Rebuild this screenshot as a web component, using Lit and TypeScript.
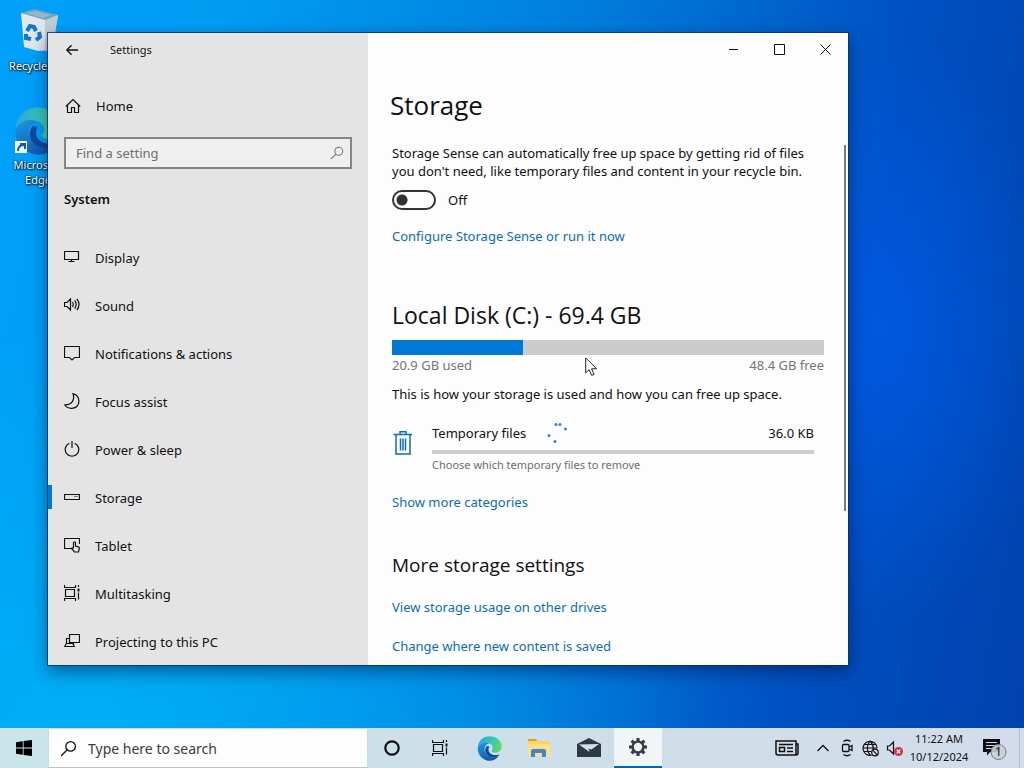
import { LitElement, html, css, svg } from "lit";
import { customElement, state } from "lit/decorators.js";

const ic = (body: unknown, size = 16) => html`<svg width=${size} height=${size} viewBox="0 0 16 16" fill="none" stroke="currentColor" stroke-width="1.2" aria-hidden="true">${body}</svg>`;

const icons = {
  display: svg`<path d="M.5 2.500h14v8H.5zM7.500 10.500v2M4.500 12.500h6"/>`,
  sound: svg`<path d="M.5 5.500h2.500L6.500 2v11L3 9.500H.5zM8.500 5q1.600 2.500 0 5M10.700 3.300q3 4.200 0 8.400M12.900 1.800q4.200 5.700 0 11.400"/>`,
  notifications: svg`<path d="M.5 1.500h15v11h-5L8 15l-2.500-2.500h-5z"/>`,
  focus: svg`<path d="M9 .6C17 3 17 14.500 8 15.300 4.500 15.500 2 14 .8 11.800 8 12 11 7 9 .6z"/>`,
  power: svg`<path d="M5.300 2.200a6.800 6.800 0 1 0 5.400 0M8 0v7"/>`,
  storage: svg`<path d="M.5 5.500h15v5H.5z"/><path d="M10.500 7.500h1M12.500 7.500h1"/>`,
  tablet: svg`<path d="M7 11.500H.5v-10h15V7"/><path d="M9.500 11V5.500q1-1.500 2 0V9l3 .8q1 .5.800 1.700l-.8 3.500h-4L7.500 11.500q1-1.200 2 0"/>`,
  multitasking: svg`<path d="M1.500 4.500h9v7h-9zM.5 0v2.500h11V0M.5 16v-2.500h11V16M14.500 0v2M14.500 7.500v7"/><path d="M14.500 3.500v3" stroke-width="2"/>`,
  projecting: svg`<path d="M5.500 1.500h10v8h-10z"/><path d="M5.500 5.500h-3v5M.8 13.500h9.500l-1.500-3H2.300zM9.500 9.500v2"/>`,
  home: svg`<path d="M.8 8.500 8 1.500l7.200 7M2.500 7v7.500h4v-5h3v5h4V7"/>`,
  search: svg`<circle cx="10" cy="6" r="4.500"/><path d="M6.800 9.200 1 15"/>`,
  back: svg`<path d="M15 8H2.500M7.500 2.500 2 8l5.500 5.500" stroke-width="1.500"/>`,
};

const edge = (size: number, id: string) => html`<svg width=${size} height=${size} viewBox="0 0 24 24" aria-hidden="true">
  <defs>
    <linearGradient id="${id}a" x1="0" y1=".3" x2="1" y2=".5"><stop offset="0" stop-color="#2aa5dc"/><stop offset=".6" stop-color="#36c9b5"/><stop offset="1" stop-color="#66d85f"/></linearGradient>
    <linearGradient id="${id}b" x1="0" y1="0" x2=".6" y2="1"><stop offset="0" stop-color="#1c9be4"/><stop offset="1" stop-color="#1456b0"/></linearGradient>
  </defs>
  <path fill="url(#${id}b)" d="M1 10C3 5.500 8 4.500 12 7c-4 1-6 5-4 9s7 6 13 3c-4 6-11 6-15.500 2.500C1.500 18.500 0 14 1 10z"/>
  <path fill="#114a98" d="M9.500 9.500C6 13 8 20 15 20.500c3 .2 5.500-1 7-3-4 1.700-9 .7-10.500-2.500-.8-2-.4-4 .5-5z"/>
  <path fill="url(#${id}a)" d="M.8 11C1.200 4.500 6 .3 12 .3c7 0 11.700 4.700 11.700 9.700 0 3.600-2.700 6-6 6-3 0-4.300-1.200-3.400-2.400 1.500-2 .7-5-2.300-6.300C8 5.500 3 6.500.8 11z"/>
</svg>`;

const navItems: [string, unknown][] = [
  ["Display", icons.display],
  ["Sound", icons.sound],
  ["Notifications & actions", icons.notifications],
  ["Focus assist", icons.focus],
  ["Power & sleep", icons.power],
  ["Storage", icons.storage],
  ["Tablet", icons.tablet],
  ["Multitasking", icons.multitasking],
  ["Projecting to this PC", icons.projecting],
];

const base = css`
  * { box-sizing: border-box; }
  svg { display: block; flex: none; }
  button, input { font: inherit; color: inherit; border: 0; background: none; padding: 0; margin: 0; border-radius: 0; }
  h1, h2, h3, p, ul { margin: 0; padding: 0; font-weight: 400; }
  ul { list-style: none; }
  a { color: inherit; text-decoration: none; }
`;

@customElement("settings-sidebar")
class SettingsSidebar extends LitElement {
  @state() current = "Storage";

  static styles = [base, css`
    :host { display: block; background: #e4e4e4; overflow: hidden; }
    .title { display: flex; align-items: center; height: 33px; font-size: 11px; }
    .back { width: 48px; height: 32px; display: grid; place-items: center; }
    .caption { padding-left: 14px; }
    .home { display: flex; align-items: center; gap: 15px; height: 48px; margin-top: 16px; padding-left: 17px; }
    .search { display: flex; align-items: center; height: 32px; margin: 7px 16px 0; padding: 0 6px 0 10px; border: 2px solid #858585; background: #efefef; color: #777; }
    .search input { flex: 1; min-width: 0; outline: 0; }
    .search input::placeholder { color: #707070; opacity: 1; }
    .group { font-size: 13px; line-height: 60px; margin-bottom: 5px; padding-left: 16px; font-weight: 600; }
    .item { display: flex; align-items: center; gap: 15px; height: 48px; padding-left: 16px; position: relative; }
    .item svg { margin-bottom: 2px; }
    .item.on::before { content: ""; position: absolute; left: 0; top: 11px; width: 4px; height: 24px; background: #0078d7; }
  `];

  render() {
    return html`
      <div class="title">
        <button class="back" aria-label="Back">${ic(icons.back, 14)}</button>
        <span class="caption">Settings</span>
      </div>
      <a class="home" href="#home">${ic(icons.home)}Home</a>
      <label class="search"><input type="text" placeholder="Find a setting" aria-label="Find a setting">${ic(icons.search, 14)}</label>
      <h2 class="group">System</h2>
      <ul>${navItems.map(([name, icon]) => html`
        <li><a class="item ${name === this.current ? "on" : ""}" href="#" @click=${() => (this.current = name)}>${ic(icon)}${name}</a></li>`)}
      </ul>`;
  }
}

@customElement("storage-page")
class StoragePage extends LitElement {
  @state() used = 30.3;

  static styles = [base, css`
    :host { display: flex; flex-direction: column; background: #fdfdfd; min-width: 0; overflow: hidden; position: relative; }
    .buttons { display: flex; justify-content: flex-end; height: 33px; flex: none; }
    .buttons button { width: 46px; display: grid; place-items: center; }
    h1, h2, h3 { font-family: "Open Sans", "Noto Sans", sans-serif; }
    h1 { font-size: 26px; line-height: 40px; margin-top: 19px; padding-left: 22px; }
    .content { flex: 1; min-height: 0; overflow: hidden; padding: 19px 24px 0; }
    .content > p, .link { line-height: 18px; }
    .link { display: block; width: fit-content; color: #0a6cbd; }
    .switch { display: flex; align-items: center; gap: 12px; height: 20px; margin: 10px 0 17px; }
    .switch input { appearance: none; width: 44px; height: 20px; border: 2px solid #333; border-radius: 10px; background: radial-gradient(circle at 8px 8px, #333 5px, transparent 6px); }
    h2 { font-size: 23px; line-height: 32px; margin-top: 54px; }
    .disk { height: 15px; margin-top: 9px; background: #ccc; }
    .fill { height: 100%; background: #0078d7; }
    .split { display: flex; justify-content: space-between; line-height: 18px; color: #767676; margin: 1px 0 11px; }
    .category { display: flex; gap: 20px; margin: 21px 10px 20px 0; color: inherit; }
    .category > svg { color: #0f6cb6; margin-top: 6px; }
    .detail { flex: 1; }
    .row { display: flex; line-height: 18px; }
    .ring { margin: -1px auto 0 20px; }
    .line { height: 4px; margin: 7px 0 3px; background: #ccc; }
    .note { font-size: 11px; line-height: 16px; color: #6e6e6e; }
    h3 { font-size: 19px; line-height: 28px; margin: 40px 0 19px; }
    .more { display: grid; gap: 21px; }
    .thumb { position: absolute; right: 2px; top: 112px; height: 366px; width: 2px; background: #7d7d7d; }
  `];

  render() {
    return html`
      <div class="buttons">
        <button aria-label="Minimize"><svg width="11" height="11" stroke="#111"><path d="M1 5.500h9"/></svg></button>
        <button aria-label="Maximize"><svg width="11" height="11" stroke="#111" fill="none"><path d="M.5.500h10v10H.5z"/></svg></button>
        <button aria-label="Close"><svg width="11" height="11" stroke="#111"><path d="m.5.500 10 10m0-10-10 10"/></svg></button>
      </div>
      <h1>Storage</h1>
      <div class="content">
        <p>Storage Sense can automatically free up space by getting rid of files<br>you don't need, like temporary files and content in your recycle bin.</p>
        <label class="switch"><input type="checkbox" role="switch">Off</label>
        <a class="link" href="#sense">Configure Storage Sense or run it now</a>
        <h2>Local Disk (C:) - 69.4 GB</h2>
        <div class="disk"><div class="fill" style="width:${this.used}%"></div></div>
        <div class="split"><span>20.9 GB used</span><span>48.4 GB free</span></div>
        <p>This is how your storage is used and how you can free up space.</p>
        <a class="category" href="#temporary">
          <svg width="20" height="26" viewBox="0 0 20 26" fill="none" stroke="currentColor"><path stroke-width="1.500" d="M1.500 4.500h19M8 4V1.700h6V4M4 5v19h14V5M8.500 8.500v12M11 8.500v12M13.500 8.500v12"/></svg>
          <div class="detail">
            <div class="row"><span>Temporary files</span>
              <svg class="ring" width="22" height="20" viewBox="0 0 22 20" fill="#3a84c0"><circle cx="10" cy="1.500" r="1.500"/><circle cx="14" cy="1.500" r="1.500"/><circle cx="19.500" cy="6" r="1.500"/><circle cx="3" cy="12.500" r="1.500"/><circle cx="9" cy="18.500" r="1.500"/></svg>
              <span>36.0 KB</span></div>
            <div class="line"></div>
            <div class="note">Choose which temporary files to remove</div>
          </div>
        </a>
        <a class="link" href="#categories">Show more categories</a>
        <h3>More storage settings</h3>
        <div class="more">
          <a class="link" href="#drives">View storage usage on other drives</a>
          <a class="link" href="#content">Change where new content is saved</a>
        </div>
      </div>
      <div class="thumb"></div>`;
  }
}

@customElement("task-bar")
class TaskBar extends LitElement {
  static styles = [base, css`
    :host { display: flex; height: 40px; background: linear-gradient(90deg, #cbe4ea, #cddfe8 50%, #d3dcea); color: #111; }
    button { display: grid; place-items: center; flex: none; }
    .start, .tool, .active { width: 48px; }
    .app { width: 50px; }
    .search { display: flex; align-items: center; gap: 11px; width: 320px; padding-left: 11px; background: #fdfdfd; border: 1px solid #c8dbe2; border-bottom-color: #b5c2c8; font-size: 14px; }
    .search input { flex: 1; min-width: 0; outline: 0; }
    .search input::placeholder { color: #3c3c3c; opacity: 1; }
    .active { background: #eff5f8; border-bottom: 2px solid #0067b8; }
    .tray { display: flex; align-items: center; margin-left: auto; }
    .tray button { width: 24px; height: 40px; }
    .tray .news { width: 48px; }
    .clock { width: 64px; text-align: center; font-size: 11px; line-height: 18px; white-space: nowrap; }
    .tray .notes { width: 48px; }
    .peek { width: 5px; height: 40px; border-left: 1px solid #b3bfcb; }
  `];

  render() {
    return html`
      <button class="start" aria-label="Start"><svg width="16" height="16" viewBox="0 0 16 16" fill="#000"><path d="M0 2.200 6.800 1.200V7.600H0zM7.600 1.100 16 0v7.600H7.600zM0 8.400h6.800v6.400L0 13.800zM7.600 8.400H16V16l-8.400-1.100z"/></svg></button>
      <label class="search">${ic(icons.search, 17)}<input type="text" placeholder="Type here to search" aria-label="Type here to search"></label>
      <button class="tool" aria-label="Cortana"><svg width="16" height="16" fill="none" stroke="#111" stroke-width="2.200"><circle cx="8" cy="8" r="6.700"/></svg></button>
      <button class="tool" aria-label="Task View">${ic(icons.multitasking)}</button>
      <button class="app" aria-label="Microsoft Edge">${edge(25, "t")}</button>
      <button class="app" aria-label="File Explorer"><svg width="24" height="20" viewBox="0 0 24 20"><path fill="#e8a413" d="M1 1h8l2 2.500H1z"/><path fill="#fbd465" d="M1 3h20q2 0 2 2v13H1z"/><path fill="#fddf85" d="M1 6h22v12H1z"/><path fill="#3f86cf" d="M4 19v-6q0-2 2-2h11q2 0 2 2v6h-4v-4H8v4z"/></svg></button>
      <button class="app" aria-label="Mail"><svg width="24" height="20" viewBox="0 0 24 20"><path fill="#2e3a43" d="M0 6 12 0l12 6v13H0z"/><path fill="#d3e2e9" d="M2 6.500 22 6l-7.500 5.500-3-.8L12.500 14 2 6.500z"/></svg></button>
      <button class="active" aria-label="Settings"><svg width="20" height="20" viewBox="-10 -10 20 20" fill="none" stroke="#3b3b3b"><circle r="5.400" stroke-width="2.400"/>${[0, 45, 90, 135, 180, 225, 270, 315].map(a => svg`<path d="M0-6v-3" stroke-width="3.200" transform="rotate(${a})"/>`)}</svg></button>
      <div class="tray">
        <button class="news" aria-label="News and interests"><svg width="24" height="16" fill="none" stroke="#111" stroke-width="1.500"><path d="M1 1h20v14H3q-2 0-2-2zM21 4h2v9q0 2-2 2M4 4.500h14M4.500 7.500h5v4h-5zM12 8h6M12 11.500h6"/></svg></button>
        <button aria-label="Show hidden icons"><svg width="12" height="8" fill="none" stroke="#111" stroke-width="1.300"><path d="m.5 7 5.500-5.500L11.500 7"/></svg></button>
        <button aria-label="Meet now"><svg width="12" height="18" fill="none" stroke="#111" stroke-width="1.300"><rect x="1.500" y="5.500" width="6.500" height="7" rx="1"/><path d="m8 8 3-1.500v5L8 10M2.500 2.500q3.500-2.500 7 0M2.500 15.500q3.500 2.500 7 0"/></svg></button>
        <button aria-label="Network">
          <svg width="18" height="17" fill="none" stroke="#111" stroke-width="1.200"><path d="M9.500 15.200A7 7 0 1 1 15 8M1 8h14M2 4.500h12M2 11.500h7M8 1Q2.500 8 8 15M8 1q3.500 3.500 3.200 8"/><circle cx="13" cy="12.500" r="3.300"/><path d="m10.800 10.300 4.500 4.500"/></svg></button>
        <button aria-label="Volume muted"><svg width="18" height="16" fill="none"><path d="M1.500 6h2l4-4v12l-4-4h-2z" stroke="#111" stroke-width="1.200"/><circle cx="12.500" cy="11.500" r="4.500" fill="#d13442"/><path d="m10.800 9.800 3.400 3.400m0-3.400-3.400 3.400" stroke="#fff" stroke-width="1.300"/></svg></button>
        <div class="clock">11:22 AM<br>10/12/2024</div>
        <button class="notes" aria-label="1 new notification">
          <svg width="24" height="24" viewBox="0 0 24 24"><path fill="#0c0f14" d="M0 3h17v13H7l-3 3.500V16H0z"/><path stroke="#d3dcea" d="M3 6.500h11M3 9.500h11M3 12.500h8"/><circle cx="15.500" cy="16" r="7.500" fill="#c9d0da" fill-opacity=".9" stroke="#777"/><text x="15.500" y="20" text-anchor="middle" font-size="12" fill="#111">1</text></svg>
        </button>
        <div class="peek"></div>
      </div>`;
  }
}

@customElement("app-root")
class AppRoot extends LitElement {
  static styles = [base, css`
    :host { display: grid; grid-template-rows: 1fr auto; height: 100vh; overflow: hidden; font-family: "Noto Sans", "Open Sans", sans-serif; font-size: 13px; color: #111; }
    .desktop { position: relative; overflow: hidden; background:
      radial-gradient(ellipse 180px 300px at 86% 45%, rgba(0, 92, 235, .7), transparent),
      radial-gradient(ellipse 640px 420px at 8% 100%, rgba(0, 178, 245, .8), transparent),
      linear-gradient(100deg, #00a0fa 0%, #009cf4 20%, #007fdf 50%, #004fc2 80%, #0042ad 100%); }
    .shortcuts { position: absolute; left: 0; top: 8px; width: 76px; display: grid; gap: 34px; color: #fff; font-size: 11px; line-height: 15px; text-align: center; text-shadow: 1px 1px 2px #000, 0 0 2px #000; }
    .shortcut { display: grid; justify-items: center; gap: 2px; color: #fff; }
    .window { position: absolute; left: 48px; top: 33px; width: 800px; height: 632px; display: grid; grid-template-columns: 320px 1fr; box-shadow: 0 0 0 1px rgba(10, 50, 90, .8), 0 6px 16px rgba(0, 10, 50, .5); }
    .pointer { position: absolute; left: 585px; top: 357px; }
  `];

  render() {
    return html`
      <main class="desktop">
        <nav class="shortcuts">
          <a class="shortcut" href="#bin">
            <svg width="48" height="48" viewBox="0 0 48 48"><path fill="#dfe6ec" d="m7 5 37 2-6 35-14 1-14-4z"/><path fill="#c0cbd4" d="m31 12 13-5-6 35-7 1z"/><path fill="#6fa4c4" d="M7 5 20 1l24 6-13 5z"/><path fill="#9db6c5" d="m12 5 10-2 15 4-8 3z"/><path fill="none" stroke="#1477cf" stroke-width="4" d="m13 23 3-5 4 1 2 4M25 24l1 5-4 3M17 31l-5-1 0-4"/></svg>
            Recycle Bin</a>
          <a class="shortcut" href="#edge">
            <svg width="48" height="48" viewBox="0 0 48 48">${edge(48, "d")}<path fill="#f4f8fc" d="M1 34h12v12H1z"/><path fill="none" stroke="#1558a8" stroke-width="2" d="M4 44q0-6 6-6M6 37h5v5"/></svg>
            Microsoft<br>Edge</a>
        </nav>
        <section class="window" aria-label="Settings">
          <settings-sidebar></settings-sidebar>
          <storage-page></storage-page>
        </section>
        <svg class="pointer" width="13" height="20" viewBox="0 0 13 20"><path fill="#fff" stroke="#222" d="M.7.900v15l3.500-3.300 2.500 5.800 2.400-1-2.500-5.600h5z"/></svg>
      </main>
      <task-bar></task-bar>`;
  }
}
